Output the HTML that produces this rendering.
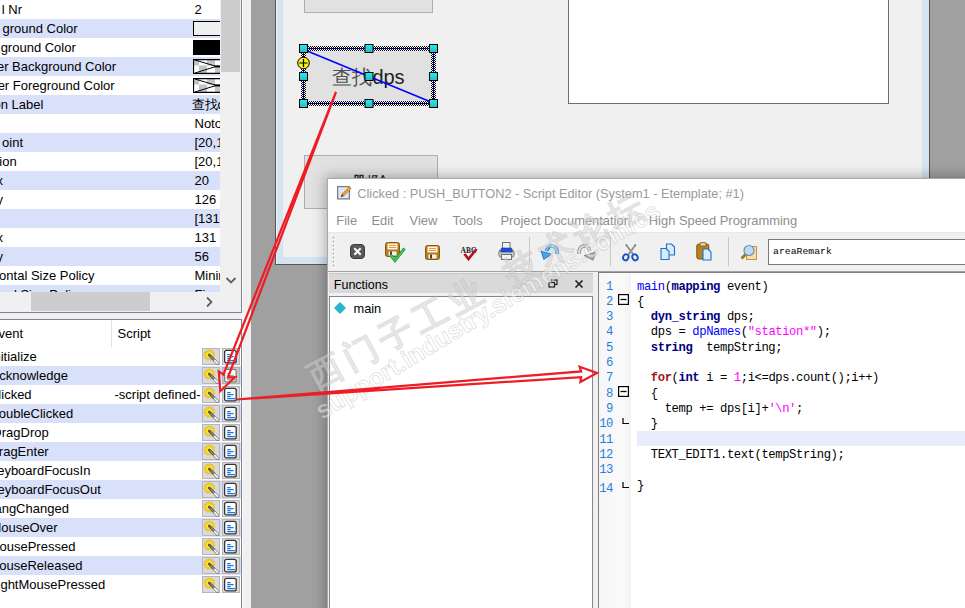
<!DOCTYPE html><html><head><meta charset="utf-8"><style>
*{margin:0;padding:0;box-sizing:border-box}
html,body{width:965px;height:608px;overflow:hidden;background:#a0a0a0;font-family:'Liberation Sans', sans-serif;position:relative}
.a{position:absolute}
.t{position:absolute;white-space:nowrap;font-size:13px;line-height:19px;color:#000}
.code{position:absolute;left:637px;white-space:pre;font-family:'Liberation Mono', monospace;font-size:12.2px;letter-spacing:-0.40px;line-height:15.3px;height:15.3px;color:#000}
.ln{position:absolute;left:593px;width:20px;text-align:right;white-space:pre;font-family:'Liberation Mono', monospace;font-size:12.2px;letter-spacing:-0.40px;line-height:15.3px;color:#1f80e0}
.kw{color:#000080;font-weight:bold}
.fn{color:#0000ff}
.st{color:#ff00ff}
.fr{color:#a01818;font-weight:bold}
.menu{position:absolute;top:208px;line-height:24px;font-size:12.9px;color:#8e8e8e;white-space:nowrap}
</style></head><body>
<div class="a" style="left:0;top:0;width:251px;height:608px;background:#f0f0f0"></div>
<div class="a" style="left:242px;top:0;width:1px;height:608px;background:#fafafa"></div>
<div class="a" style="left:0;top:0;width:220px;height:292px;overflow:hidden;background:#fff">
<div class="a" style="left:0;top:0px;width:220px;height:19px;background:#fff"></div>
<div class="t" style="left:-300px;width:322px;text-align:right;top:0px">l Nr</div>
<div class="a" style="left:0;top:19px;width:220px;height:19px;background:#d8e0fa"></div>
<div class="t" style="left:-300px;width:377.6px;text-align:right;top:19px">ground Color</div>
<div class="a" style="left:0;top:38px;width:220px;height:19px;background:#fff"></div>
<div class="t" style="left:-300px;width:375.8px;text-align:right;top:38px">ground Color</div>
<div class="a" style="left:0;top:57px;width:220px;height:19px;background:#d8e0fa"></div>
<div class="t" style="left:-300px;width:416.2px;text-align:right;top:57px">er Background Color</div>
<div class="a" style="left:0;top:76px;width:220px;height:19px;background:#fff"></div>
<div class="t" style="left:-300px;width:414.7px;text-align:right;top:76px">er Foreground Color</div>
<div class="a" style="left:0;top:95px;width:220px;height:19px;background:#d8e0fa"></div>
<div class="t" style="left:-300px;width:343.4px;text-align:right;top:95px">on Label</div>
<div class="a" style="left:0;top:114px;width:220px;height:19px;background:#fff"></div>
<div class="t" style="left:-300px;width:295px;text-align:right;top:114px"></div>
<div class="a" style="left:0;top:133px;width:220px;height:19px;background:#d8e0fa"></div>
<div class="t" style="left:-300px;width:323px;text-align:right;top:133px">oint</div>
<div class="a" style="left:0;top:152px;width:220px;height:19px;background:#fff"></div>
<div class="t" style="left:-300px;width:316.7px;text-align:right;top:152px">ion</div>
<div class="a" style="left:0;top:171px;width:220px;height:19px;background:#d8e0fa"></div>
<div class="t" style="left:-300px;width:303px;text-align:right;top:171px">x</div>
<div class="a" style="left:0;top:190px;width:220px;height:19px;background:#fff"></div>
<div class="t" style="left:-300px;width:303px;text-align:right;top:190px">y</div>
<div class="a" style="left:0;top:209px;width:220px;height:19px;background:#d8e0fa"></div>
<div class="t" style="left:-300px;width:295px;text-align:right;top:209px"></div>
<div class="a" style="left:0;top:228px;width:220px;height:19px;background:#fff"></div>
<div class="t" style="left:-300px;width:303px;text-align:right;top:228px">x</div>
<div class="a" style="left:0;top:247px;width:220px;height:19px;background:#d8e0fa"></div>
<div class="t" style="left:-300px;width:303px;text-align:right;top:247px">y</div>
<div class="a" style="left:0;top:266px;width:220px;height:19px;background:#fff"></div>
<div class="t" style="left:-300px;width:394.5px;text-align:right;top:266px">zontal Size Policy</div>
<div class="a" style="left:0;top:285px;width:220px;height:19px;background:#d8e0fa"></div>
<div class="t" style="left:-300px;width:384px;text-align:right;top:285px">ical Size Policy</div>
<div class="t" style="left:194.5px;top:0px">2</div>
<div class="t" style="left:191.5px;top:95px">查找dps</div>
<div class="t" style="left:194.5px;top:114px">Noto Sans</div>
<div class="t" style="left:194.5px;top:133px">[20,126]</div>
<div class="t" style="left:194.5px;top:152px">[20,126]</div>
<div class="t" style="left:194.5px;top:171px">20</div>
<div class="t" style="left:194.5px;top:190px">126</div>
<div class="t" style="left:194.5px;top:209px">[131,56]</div>
<div class="t" style="left:194.5px;top:228px">131</div>
<div class="t" style="left:194.5px;top:247px">56</div>
<div class="t" style="left:194.5px;top:266px">Minimum</div>
<div class="t" style="left:194.5px;top:285px">Fixed</div>
<div class="a" style="left:193px;top:21px;width:40px;height:15px;background:#f0f0f0;border:1px solid #000"></div>
<div class="a" style="left:193px;top:40px;width:40px;height:15px;background:#000"></div>
<svg class="a" style="left:193px;top:59px" width="30" height="15" viewBox="0 0 30 15">
<rect x="0" y="0" width="30" height="15" fill="#fff"/>
<g fill="#c4c4c4"><rect x="1" y="1" width="5" height="5.5"/><rect x="14" y="1" width="8" height="5.5"/><rect x="6" y="6.5" width="8" height="7.5"/><rect x="22" y="6.5" width="8" height="7.5"/></g>
<path d="M0.5 0 V15 M0 0.6 H30 M0 14.4 H30" stroke="#000" stroke-width="1.2" fill="none"/>
<path d="M2 1 L22 7 M2 14 L22 7.8" stroke="#000" stroke-width="1" fill="none"/>
<rect x="21.5" y="6.4" width="9" height="2" fill="#000"/>
</svg>
<svg class="a" style="left:193px;top:78px" width="30" height="15" viewBox="0 0 30 15">
<rect x="0" y="0" width="30" height="15" fill="#fff"/>
<g fill="#c4c4c4"><rect x="1" y="1" width="5" height="5.5"/><rect x="14" y="1" width="8" height="5.5"/><rect x="6" y="6.5" width="8" height="7.5"/><rect x="22" y="6.5" width="8" height="7.5"/></g>
<path d="M0.5 0 V15 M0 0.6 H30 M0 14.4 H30" stroke="#000" stroke-width="1.2" fill="none"/>
<path d="M2 1 L22 7 M2 14 L22 7.8" stroke="#000" stroke-width="1" fill="none"/>
<rect x="21.5" y="6.4" width="9" height="2" fill="#000"/>
</svg>
</div>
<div class="a" style="left:220px;top:0;width:21px;height:292px;background:#f0f0f0"></div>
<div class="a" style="left:221px;top:0;width:19px;height:72px;background:#cdcdcd"></div>
<svg class="a" style="left:224px;top:275px" width="14" height="12"><path d="M2.5 3 L7 7.5 L11.5 3" stroke="#606060" stroke-width="1.8" fill="none"/></svg>
<div class="a" style="left:0;top:292px;width:241px;height:20px;background:#f0f0f0"></div>
<div class="a" style="left:31px;top:292px;width:119px;height:19px;background:#cdcdcd"></div>
<svg class="a" style="left:203px;top:295px" width="14" height="14"><path d="M4 2.5 L8.5 7 L4 11.5" stroke="#606060" stroke-width="1.8" fill="none"/></svg>
<div class="a" style="left:241px;top:0;width:1px;height:313px;background:#7d8590"></div>
<div class="a" style="left:0;top:312px;width:242px;height:1px;background:#7d8590"></div>
<div class="a" style="left:0;top:319px;width:242px;height:1px;background:#7d8590"></div>
<div class="a" style="left:241px;top:319px;width:1px;height:289px;background:#7d8590"></div>
<div class="a" style="left:0;top:320px;width:241px;height:288px;background:#fff;overflow:hidden">
<div class="a" style="left:111px;top:0;width:1px;height:27px;background:#e3e3e3"></div>
<div class="t" style="left:-300px;width:323.2px;text-align:right;top:4px;line-height:19px">Event</div>
<div class="t" style="left:117.5px;top:4px">Script</div>
<div class="a" style="left:0;top:27px;width:241px;height:19px;background:#fff"></div>
<div class="t" style="left:-300px;width:336.8px;text-align:right;top:27px">Initialize</div>
<svg class="a" style="left:202px;top:28px" width="18" height="17" viewBox="0 0 18 17">
<rect x="0.5" y="0.5" width="17" height="16" fill="#dadada" stroke="#b6b6b6"/>
<g transform="translate(7.3,7)"><path d="M0 -5.6 L1.1 -3.9 L2.9 -4.8 L3.1 -2.8 L5.1 -2.6 L4.2 -0.9 L5.6 0.5 L3.8 1.5 L4.3 3.5 L2.3 3.5 L1.7 5.4 L0 4.2 L-1.7 5.4 L-2.3 3.5 L-4.3 3.5 L-3.8 1.5 L-5.6 0.5 L-4.2 -0.9 L-5.1 -2.6 L-3.1 -2.8 L-2.9 -4.8 L-1.1 -3.9 Z" fill="#f8d81a" stroke="#e0b030" stroke-width="0.7"/>
<circle r="2.6" fill="#fbe64a"/></g>
<path d="M7.3 7 L15.6 15.4" stroke="#5a5a5a" stroke-width="2.8" stroke-linecap="round"/>
<path d="M8.6 8.3 L13 12.7" stroke="#a8a8a8" stroke-width="1"/>
<path d="M12.8 12.6 L15.6 15.4" stroke="#f8f8f8" stroke-width="2" stroke-linecap="round"/>
</svg>
<svg class="a" style="left:222px;top:28px" width="18" height="17" viewBox="0 0 18 17">
<rect x="0.5" y="0.5" width="17" height="16" fill="#dadada" stroke="#b6b6b6"/>
<rect x="2.6" y="2.3" width="11.6" height="12.6" rx="2" fill="#fdfdfd" stroke="#333" stroke-width="1.3"/>
<g stroke="#1a78e6" stroke-width="1.25" stroke-linecap="butt"><path d="M5.2 6.5 H8.6 M5.2 8.5 H11.6 M5.2 10.5 H8.6 M5.2 12.5 H13"/></g>
</svg>
<div class="a" style="left:0;top:46px;width:241px;height:19px;background:#d8e0fa"></div>
<div class="t" style="left:-300px;width:367.9px;text-align:right;top:46px">Acknowledge</div>
<svg class="a" style="left:202px;top:47px" width="18" height="17" viewBox="0 0 18 17">
<rect x="0.5" y="0.5" width="17" height="16" fill="#dadada" stroke="#b6b6b6"/>
<g transform="translate(7.3,7)"><path d="M0 -5.6 L1.1 -3.9 L2.9 -4.8 L3.1 -2.8 L5.1 -2.6 L4.2 -0.9 L5.6 0.5 L3.8 1.5 L4.3 3.5 L2.3 3.5 L1.7 5.4 L0 4.2 L-1.7 5.4 L-2.3 3.5 L-4.3 3.5 L-3.8 1.5 L-5.6 0.5 L-4.2 -0.9 L-5.1 -2.6 L-3.1 -2.8 L-2.9 -4.8 L-1.1 -3.9 Z" fill="#f8d81a" stroke="#e0b030" stroke-width="0.7"/>
<circle r="2.6" fill="#fbe64a"/></g>
<path d="M7.3 7 L15.6 15.4" stroke="#5a5a5a" stroke-width="2.8" stroke-linecap="round"/>
<path d="M8.6 8.3 L13 12.7" stroke="#a8a8a8" stroke-width="1"/>
<path d="M12.8 12.6 L15.6 15.4" stroke="#f8f8f8" stroke-width="2" stroke-linecap="round"/>
</svg>
<svg class="a" style="left:222px;top:47px" width="18" height="17" viewBox="0 0 18 17">
<rect x="0.5" y="0.5" width="17" height="16" fill="#c8c8c8" stroke="#b0b0b0"/>
<rect x="2.6" y="2.3" width="11.6" height="12.6" rx="2" fill="#fdfdfd" stroke="#808080" stroke-width="1.3"/>
<g stroke="#9a9a9a" stroke-width="1.25" stroke-linecap="butt"><path d="M5.2 6.5 H8.6 M5.2 8.5 H11.6 M5.2 10.5 H8.6 M5.2 12.5 H13"/></g>
</svg>
<div class="a" style="left:0;top:65px;width:241px;height:19px;background:#fff"></div>
<div class="t" style="left:-300px;width:331.6px;text-align:right;top:65px">Clicked</div>
<div class="t" style="left:114.5px;top:65px">-script defined-</div>
<svg class="a" style="left:202px;top:66px" width="18" height="17" viewBox="0 0 18 17">
<rect x="0.5" y="0.5" width="17" height="16" fill="#dadada" stroke="#b6b6b6"/>
<g transform="translate(7.3,7)"><path d="M0 -5.6 L1.1 -3.9 L2.9 -4.8 L3.1 -2.8 L5.1 -2.6 L4.2 -0.9 L5.6 0.5 L3.8 1.5 L4.3 3.5 L2.3 3.5 L1.7 5.4 L0 4.2 L-1.7 5.4 L-2.3 3.5 L-4.3 3.5 L-3.8 1.5 L-5.6 0.5 L-4.2 -0.9 L-5.1 -2.6 L-3.1 -2.8 L-2.9 -4.8 L-1.1 -3.9 Z" fill="#f8d81a" stroke="#e0b030" stroke-width="0.7"/>
<circle r="2.6" fill="#fbe64a"/></g>
<path d="M7.3 7 L15.6 15.4" stroke="#5a5a5a" stroke-width="2.8" stroke-linecap="round"/>
<path d="M8.6 8.3 L13 12.7" stroke="#a8a8a8" stroke-width="1"/>
<path d="M12.8 12.6 L15.6 15.4" stroke="#f8f8f8" stroke-width="2" stroke-linecap="round"/>
</svg>
<svg class="a" style="left:222px;top:66px" width="18" height="17" viewBox="0 0 18 17">
<rect x="0.5" y="0.5" width="17" height="16" fill="#dadada" stroke="#b6b6b6"/>
<rect x="2.6" y="2.3" width="11.6" height="12.6" rx="2" fill="#fdfdfd" stroke="#333" stroke-width="1.3"/>
<g stroke="#1a78e6" stroke-width="1.25" stroke-linecap="butt"><path d="M5.2 6.5 H8.6 M5.2 8.5 H11.6 M5.2 10.5 H8.6 M5.2 12.5 H13"/></g>
</svg>
<div class="a" style="left:0;top:84px;width:241px;height:19px;background:#d8e0fa"></div>
<div class="t" style="left:-300px;width:373.2px;text-align:right;top:84px">DoubleClicked</div>
<svg class="a" style="left:202px;top:85px" width="18" height="17" viewBox="0 0 18 17">
<rect x="0.5" y="0.5" width="17" height="16" fill="#dadada" stroke="#b6b6b6"/>
<g transform="translate(7.3,7)"><path d="M0 -5.6 L1.1 -3.9 L2.9 -4.8 L3.1 -2.8 L5.1 -2.6 L4.2 -0.9 L5.6 0.5 L3.8 1.5 L4.3 3.5 L2.3 3.5 L1.7 5.4 L0 4.2 L-1.7 5.4 L-2.3 3.5 L-4.3 3.5 L-3.8 1.5 L-5.6 0.5 L-4.2 -0.9 L-5.1 -2.6 L-3.1 -2.8 L-2.9 -4.8 L-1.1 -3.9 Z" fill="#f8d81a" stroke="#e0b030" stroke-width="0.7"/>
<circle r="2.6" fill="#fbe64a"/></g>
<path d="M7.3 7 L15.6 15.4" stroke="#5a5a5a" stroke-width="2.8" stroke-linecap="round"/>
<path d="M8.6 8.3 L13 12.7" stroke="#a8a8a8" stroke-width="1"/>
<path d="M12.8 12.6 L15.6 15.4" stroke="#f8f8f8" stroke-width="2" stroke-linecap="round"/>
</svg>
<svg class="a" style="left:222px;top:85px" width="18" height="17" viewBox="0 0 18 17">
<rect x="0.5" y="0.5" width="17" height="16" fill="#dadada" stroke="#b6b6b6"/>
<rect x="2.6" y="2.3" width="11.6" height="12.6" rx="2" fill="#fdfdfd" stroke="#333" stroke-width="1.3"/>
<g stroke="#1a78e6" stroke-width="1.25" stroke-linecap="butt"><path d="M5.2 6.5 H8.6 M5.2 8.5 H11.6 M5.2 10.5 H8.6 M5.2 12.5 H13"/></g>
</svg>
<div class="a" style="left:0;top:103px;width:241px;height:19px;background:#fff"></div>
<div class="t" style="left:-300px;width:348.7px;text-align:right;top:103px">DragDrop</div>
<svg class="a" style="left:202px;top:104px" width="18" height="17" viewBox="0 0 18 17">
<rect x="0.5" y="0.5" width="17" height="16" fill="#dadada" stroke="#b6b6b6"/>
<g transform="translate(7.3,7)"><path d="M0 -5.6 L1.1 -3.9 L2.9 -4.8 L3.1 -2.8 L5.1 -2.6 L4.2 -0.9 L5.6 0.5 L3.8 1.5 L4.3 3.5 L2.3 3.5 L1.7 5.4 L0 4.2 L-1.7 5.4 L-2.3 3.5 L-4.3 3.5 L-3.8 1.5 L-5.6 0.5 L-4.2 -0.9 L-5.1 -2.6 L-3.1 -2.8 L-2.9 -4.8 L-1.1 -3.9 Z" fill="#f8d81a" stroke="#e0b030" stroke-width="0.7"/>
<circle r="2.6" fill="#fbe64a"/></g>
<path d="M7.3 7 L15.6 15.4" stroke="#5a5a5a" stroke-width="2.8" stroke-linecap="round"/>
<path d="M8.6 8.3 L13 12.7" stroke="#a8a8a8" stroke-width="1"/>
<path d="M12.8 12.6 L15.6 15.4" stroke="#f8f8f8" stroke-width="2" stroke-linecap="round"/>
</svg>
<svg class="a" style="left:222px;top:104px" width="18" height="17" viewBox="0 0 18 17">
<rect x="0.5" y="0.5" width="17" height="16" fill="#dadada" stroke="#b6b6b6"/>
<rect x="2.6" y="2.3" width="11.6" height="12.6" rx="2" fill="#fdfdfd" stroke="#333" stroke-width="1.3"/>
<g stroke="#1a78e6" stroke-width="1.25" stroke-linecap="butt"><path d="M5.2 6.5 H8.6 M5.2 8.5 H11.6 M5.2 10.5 H8.6 M5.2 12.5 H13"/></g>
</svg>
<div class="a" style="left:0;top:122px;width:241px;height:19px;background:#d8e0fa"></div>
<div class="t" style="left:-300px;width:348.7px;text-align:right;top:122px">DragEnter</div>
<svg class="a" style="left:202px;top:123px" width="18" height="17" viewBox="0 0 18 17">
<rect x="0.5" y="0.5" width="17" height="16" fill="#dadada" stroke="#b6b6b6"/>
<g transform="translate(7.3,7)"><path d="M0 -5.6 L1.1 -3.9 L2.9 -4.8 L3.1 -2.8 L5.1 -2.6 L4.2 -0.9 L5.6 0.5 L3.8 1.5 L4.3 3.5 L2.3 3.5 L1.7 5.4 L0 4.2 L-1.7 5.4 L-2.3 3.5 L-4.3 3.5 L-3.8 1.5 L-5.6 0.5 L-4.2 -0.9 L-5.1 -2.6 L-3.1 -2.8 L-2.9 -4.8 L-1.1 -3.9 Z" fill="#f8d81a" stroke="#e0b030" stroke-width="0.7"/>
<circle r="2.6" fill="#fbe64a"/></g>
<path d="M7.3 7 L15.6 15.4" stroke="#5a5a5a" stroke-width="2.8" stroke-linecap="round"/>
<path d="M8.6 8.3 L13 12.7" stroke="#a8a8a8" stroke-width="1"/>
<path d="M12.8 12.6 L15.6 15.4" stroke="#f8f8f8" stroke-width="2" stroke-linecap="round"/>
</svg>
<svg class="a" style="left:222px;top:123px" width="18" height="17" viewBox="0 0 18 17">
<rect x="0.5" y="0.5" width="17" height="16" fill="#dadada" stroke="#b6b6b6"/>
<rect x="2.6" y="2.3" width="11.6" height="12.6" rx="2" fill="#fdfdfd" stroke="#333" stroke-width="1.3"/>
<g stroke="#1a78e6" stroke-width="1.25" stroke-linecap="butt"><path d="M5.2 6.5 H8.6 M5.2 8.5 H11.6 M5.2 10.5 H8.6 M5.2 12.5 H13"/></g>
</svg>
<div class="a" style="left:0;top:141px;width:241px;height:19px;background:#fff"></div>
<div class="t" style="left:-300px;width:390.4px;text-align:right;top:141px">KeyboardFocusIn</div>
<svg class="a" style="left:202px;top:142px" width="18" height="17" viewBox="0 0 18 17">
<rect x="0.5" y="0.5" width="17" height="16" fill="#dadada" stroke="#b6b6b6"/>
<g transform="translate(7.3,7)"><path d="M0 -5.6 L1.1 -3.9 L2.9 -4.8 L3.1 -2.8 L5.1 -2.6 L4.2 -0.9 L5.6 0.5 L3.8 1.5 L4.3 3.5 L2.3 3.5 L1.7 5.4 L0 4.2 L-1.7 5.4 L-2.3 3.5 L-4.3 3.5 L-3.8 1.5 L-5.6 0.5 L-4.2 -0.9 L-5.1 -2.6 L-3.1 -2.8 L-2.9 -4.8 L-1.1 -3.9 Z" fill="#f8d81a" stroke="#e0b030" stroke-width="0.7"/>
<circle r="2.6" fill="#fbe64a"/></g>
<path d="M7.3 7 L15.6 15.4" stroke="#5a5a5a" stroke-width="2.8" stroke-linecap="round"/>
<path d="M8.6 8.3 L13 12.7" stroke="#a8a8a8" stroke-width="1"/>
<path d="M12.8 12.6 L15.6 15.4" stroke="#f8f8f8" stroke-width="2" stroke-linecap="round"/>
</svg>
<svg class="a" style="left:222px;top:142px" width="18" height="17" viewBox="0 0 18 17">
<rect x="0.5" y="0.5" width="17" height="16" fill="#dadada" stroke="#b6b6b6"/>
<rect x="2.6" y="2.3" width="11.6" height="12.6" rx="2" fill="#fdfdfd" stroke="#333" stroke-width="1.3"/>
<g stroke="#1a78e6" stroke-width="1.25" stroke-linecap="butt"><path d="M5.2 6.5 H8.6 M5.2 8.5 H11.6 M5.2 10.5 H8.6 M5.2 12.5 H13"/></g>
</svg>
<div class="a" style="left:0;top:160px;width:241px;height:19px;background:#d8e0fa"></div>
<div class="t" style="left:-300px;width:400.8px;text-align:right;top:160px">KeyboardFocusOut</div>
<svg class="a" style="left:202px;top:161px" width="18" height="17" viewBox="0 0 18 17">
<rect x="0.5" y="0.5" width="17" height="16" fill="#dadada" stroke="#b6b6b6"/>
<g transform="translate(7.3,7)"><path d="M0 -5.6 L1.1 -3.9 L2.9 -4.8 L3.1 -2.8 L5.1 -2.6 L4.2 -0.9 L5.6 0.5 L3.8 1.5 L4.3 3.5 L2.3 3.5 L1.7 5.4 L0 4.2 L-1.7 5.4 L-2.3 3.5 L-4.3 3.5 L-3.8 1.5 L-5.6 0.5 L-4.2 -0.9 L-5.1 -2.6 L-3.1 -2.8 L-2.9 -4.8 L-1.1 -3.9 Z" fill="#f8d81a" stroke="#e0b030" stroke-width="0.7"/>
<circle r="2.6" fill="#fbe64a"/></g>
<path d="M7.3 7 L15.6 15.4" stroke="#5a5a5a" stroke-width="2.8" stroke-linecap="round"/>
<path d="M8.6 8.3 L13 12.7" stroke="#a8a8a8" stroke-width="1"/>
<path d="M12.8 12.6 L15.6 15.4" stroke="#f8f8f8" stroke-width="2" stroke-linecap="round"/>
</svg>
<svg class="a" style="left:222px;top:161px" width="18" height="17" viewBox="0 0 18 17">
<rect x="0.5" y="0.5" width="17" height="16" fill="#dadada" stroke="#b6b6b6"/>
<rect x="2.6" y="2.3" width="11.6" height="12.6" rx="2" fill="#fdfdfd" stroke="#333" stroke-width="1.3"/>
<g stroke="#1a78e6" stroke-width="1.25" stroke-linecap="butt"><path d="M5.2 6.5 H8.6 M5.2 8.5 H11.6 M5.2 10.5 H8.6 M5.2 12.5 H13"/></g>
</svg>
<div class="a" style="left:0;top:179px;width:241px;height:19px;background:#fff"></div>
<div class="t" style="left:-300px;width:368.9px;text-align:right;top:179px">LangChanged</div>
<svg class="a" style="left:202px;top:180px" width="18" height="17" viewBox="0 0 18 17">
<rect x="0.5" y="0.5" width="17" height="16" fill="#dadada" stroke="#b6b6b6"/>
<g transform="translate(7.3,7)"><path d="M0 -5.6 L1.1 -3.9 L2.9 -4.8 L3.1 -2.8 L5.1 -2.6 L4.2 -0.9 L5.6 0.5 L3.8 1.5 L4.3 3.5 L2.3 3.5 L1.7 5.4 L0 4.2 L-1.7 5.4 L-2.3 3.5 L-4.3 3.5 L-3.8 1.5 L-5.6 0.5 L-4.2 -0.9 L-5.1 -2.6 L-3.1 -2.8 L-2.9 -4.8 L-1.1 -3.9 Z" fill="#f8d81a" stroke="#e0b030" stroke-width="0.7"/>
<circle r="2.6" fill="#fbe64a"/></g>
<path d="M7.3 7 L15.6 15.4" stroke="#5a5a5a" stroke-width="2.8" stroke-linecap="round"/>
<path d="M8.6 8.3 L13 12.7" stroke="#a8a8a8" stroke-width="1"/>
<path d="M12.8 12.6 L15.6 15.4" stroke="#f8f8f8" stroke-width="2" stroke-linecap="round"/>
</svg>
<svg class="a" style="left:222px;top:180px" width="18" height="17" viewBox="0 0 18 17">
<rect x="0.5" y="0.5" width="17" height="16" fill="#dadada" stroke="#b6b6b6"/>
<rect x="2.6" y="2.3" width="11.6" height="12.6" rx="2" fill="#fdfdfd" stroke="#333" stroke-width="1.3"/>
<g stroke="#1a78e6" stroke-width="1.25" stroke-linecap="butt"><path d="M5.2 6.5 H8.6 M5.2 8.5 H11.6 M5.2 10.5 H8.6 M5.2 12.5 H13"/></g>
</svg>
<div class="a" style="left:0;top:198px;width:241px;height:19px;background:#d8e0fa"></div>
<div class="t" style="left:-300px;width:357.7px;text-align:right;top:198px">MouseOver</div>
<svg class="a" style="left:202px;top:199px" width="18" height="17" viewBox="0 0 18 17">
<rect x="0.5" y="0.5" width="17" height="16" fill="#dadada" stroke="#b6b6b6"/>
<g transform="translate(7.3,7)"><path d="M0 -5.6 L1.1 -3.9 L2.9 -4.8 L3.1 -2.8 L5.1 -2.6 L4.2 -0.9 L5.6 0.5 L3.8 1.5 L4.3 3.5 L2.3 3.5 L1.7 5.4 L0 4.2 L-1.7 5.4 L-2.3 3.5 L-4.3 3.5 L-3.8 1.5 L-5.6 0.5 L-4.2 -0.9 L-5.1 -2.6 L-3.1 -2.8 L-2.9 -4.8 L-1.1 -3.9 Z" fill="#f8d81a" stroke="#e0b030" stroke-width="0.7"/>
<circle r="2.6" fill="#fbe64a"/></g>
<path d="M7.3 7 L15.6 15.4" stroke="#5a5a5a" stroke-width="2.8" stroke-linecap="round"/>
<path d="M8.6 8.3 L13 12.7" stroke="#a8a8a8" stroke-width="1"/>
<path d="M12.8 12.6 L15.6 15.4" stroke="#f8f8f8" stroke-width="2" stroke-linecap="round"/>
</svg>
<svg class="a" style="left:222px;top:199px" width="18" height="17" viewBox="0 0 18 17">
<rect x="0.5" y="0.5" width="17" height="16" fill="#dadada" stroke="#b6b6b6"/>
<rect x="2.6" y="2.3" width="11.6" height="12.6" rx="2" fill="#fdfdfd" stroke="#333" stroke-width="1.3"/>
<g stroke="#1a78e6" stroke-width="1.25" stroke-linecap="butt"><path d="M5.2 6.5 H8.6 M5.2 8.5 H11.6 M5.2 10.5 H8.6 M5.2 12.5 H13"/></g>
</svg>
<div class="a" style="left:0;top:217px;width:241px;height:19px;background:#fff"></div>
<div class="t" style="left:-300px;width:375.4px;text-align:right;top:217px">MousePressed</div>
<svg class="a" style="left:202px;top:218px" width="18" height="17" viewBox="0 0 18 17">
<rect x="0.5" y="0.5" width="17" height="16" fill="#dadada" stroke="#b6b6b6"/>
<g transform="translate(7.3,7)"><path d="M0 -5.6 L1.1 -3.9 L2.9 -4.8 L3.1 -2.8 L5.1 -2.6 L4.2 -0.9 L5.6 0.5 L3.8 1.5 L4.3 3.5 L2.3 3.5 L1.7 5.4 L0 4.2 L-1.7 5.4 L-2.3 3.5 L-4.3 3.5 L-3.8 1.5 L-5.6 0.5 L-4.2 -0.9 L-5.1 -2.6 L-3.1 -2.8 L-2.9 -4.8 L-1.1 -3.9 Z" fill="#f8d81a" stroke="#e0b030" stroke-width="0.7"/>
<circle r="2.6" fill="#fbe64a"/></g>
<path d="M7.3 7 L15.6 15.4" stroke="#5a5a5a" stroke-width="2.8" stroke-linecap="round"/>
<path d="M8.6 8.3 L13 12.7" stroke="#a8a8a8" stroke-width="1"/>
<path d="M12.8 12.6 L15.6 15.4" stroke="#f8f8f8" stroke-width="2" stroke-linecap="round"/>
</svg>
<svg class="a" style="left:222px;top:218px" width="18" height="17" viewBox="0 0 18 17">
<rect x="0.5" y="0.5" width="17" height="16" fill="#dadada" stroke="#b6b6b6"/>
<rect x="2.6" y="2.3" width="11.6" height="12.6" rx="2" fill="#fdfdfd" stroke="#333" stroke-width="1.3"/>
<g stroke="#1a78e6" stroke-width="1.25" stroke-linecap="butt"><path d="M5.2 6.5 H8.6 M5.2 8.5 H11.6 M5.2 10.5 H8.6 M5.2 12.5 H13"/></g>
</svg>
<div class="a" style="left:0;top:236px;width:241px;height:19px;background:#d8e0fa"></div>
<div class="t" style="left:-300px;width:382.4px;text-align:right;top:236px">MouseReleased</div>
<svg class="a" style="left:202px;top:237px" width="18" height="17" viewBox="0 0 18 17">
<rect x="0.5" y="0.5" width="17" height="16" fill="#dadada" stroke="#b6b6b6"/>
<g transform="translate(7.3,7)"><path d="M0 -5.6 L1.1 -3.9 L2.9 -4.8 L3.1 -2.8 L5.1 -2.6 L4.2 -0.9 L5.6 0.5 L3.8 1.5 L4.3 3.5 L2.3 3.5 L1.7 5.4 L0 4.2 L-1.7 5.4 L-2.3 3.5 L-4.3 3.5 L-3.8 1.5 L-5.6 0.5 L-4.2 -0.9 L-5.1 -2.6 L-3.1 -2.8 L-2.9 -4.8 L-1.1 -3.9 Z" fill="#f8d81a" stroke="#e0b030" stroke-width="0.7"/>
<circle r="2.6" fill="#fbe64a"/></g>
<path d="M7.3 7 L15.6 15.4" stroke="#5a5a5a" stroke-width="2.8" stroke-linecap="round"/>
<path d="M8.6 8.3 L13 12.7" stroke="#a8a8a8" stroke-width="1"/>
<path d="M12.8 12.6 L15.6 15.4" stroke="#f8f8f8" stroke-width="2" stroke-linecap="round"/>
</svg>
<svg class="a" style="left:222px;top:237px" width="18" height="17" viewBox="0 0 18 17">
<rect x="0.5" y="0.5" width="17" height="16" fill="#dadada" stroke="#b6b6b6"/>
<rect x="2.6" y="2.3" width="11.6" height="12.6" rx="2" fill="#fdfdfd" stroke="#333" stroke-width="1.3"/>
<g stroke="#1a78e6" stroke-width="1.25" stroke-linecap="butt"><path d="M5.2 6.5 H8.6 M5.2 8.5 H11.6 M5.2 10.5 H8.6 M5.2 12.5 H13"/></g>
</svg>
<div class="a" style="left:0;top:255px;width:241px;height:19px;background:#fff"></div>
<div class="t" style="left:-300px;width:405.2px;text-align:right;top:255px">RightMousePressed</div>
<svg class="a" style="left:202px;top:256px" width="18" height="17" viewBox="0 0 18 17">
<rect x="0.5" y="0.5" width="17" height="16" fill="#dadada" stroke="#b6b6b6"/>
<g transform="translate(7.3,7)"><path d="M0 -5.6 L1.1 -3.9 L2.9 -4.8 L3.1 -2.8 L5.1 -2.6 L4.2 -0.9 L5.6 0.5 L3.8 1.5 L4.3 3.5 L2.3 3.5 L1.7 5.4 L0 4.2 L-1.7 5.4 L-2.3 3.5 L-4.3 3.5 L-3.8 1.5 L-5.6 0.5 L-4.2 -0.9 L-5.1 -2.6 L-3.1 -2.8 L-2.9 -4.8 L-1.1 -3.9 Z" fill="#f8d81a" stroke="#e0b030" stroke-width="0.7"/>
<circle r="2.6" fill="#fbe64a"/></g>
<path d="M7.3 7 L15.6 15.4" stroke="#5a5a5a" stroke-width="2.8" stroke-linecap="round"/>
<path d="M8.6 8.3 L13 12.7" stroke="#a8a8a8" stroke-width="1"/>
<path d="M12.8 12.6 L15.6 15.4" stroke="#f8f8f8" stroke-width="2" stroke-linecap="round"/>
</svg>
<svg class="a" style="left:222px;top:256px" width="18" height="17" viewBox="0 0 18 17">
<rect x="0.5" y="0.5" width="17" height="16" fill="#dadada" stroke="#b6b6b6"/>
<rect x="2.6" y="2.3" width="11.6" height="12.6" rx="2" fill="#fdfdfd" stroke="#333" stroke-width="1.3"/>
<g stroke="#1a78e6" stroke-width="1.25" stroke-linecap="butt"><path d="M5.2 6.5 H8.6 M5.2 8.5 H11.6 M5.2 10.5 H8.6 M5.2 12.5 H13"/></g>
</svg>
</div>
<div class="a" style="left:275px;top:0;width:655px;height:265px;background:#555"></div>
<div class="a" style="left:276px;top:0;width:653px;height:264px;background:#eef3f9"></div>
<div class="a" style="left:277px;top:0;width:652px;height:264px;background:#d6e3f1"></div>
<div class="a" style="left:929px;top:0;width:1px;height:265px;background:#555"></div>
<div class="a" style="left:283px;top:0;width:639px;height:257px;background:#f0f0f0"></div>
<div class="a" style="left:304px;top:-10px;width:129px;height:23px;background:#e1e1e1;border:1px solid #adadad"></div>
<div class="a" style="left:568px;top:-10px;width:321px;height:114px;background:#fff;border:1px solid #6e6e6e"></div>
<div class="a" style="left:304px;top:155px;width:134px;height:54px;background:#e1e1e1;border:1px solid #adadad;overflow:hidden"><div style="position:absolute;left:46.5px;top:14.8px;font-size:19px;color:#222">删除</div></div>
<div class="a" style="left:303.5px;top:48px;width:130px;height:55.5px;background:#e1e1e1"></div>
<div class="a" style="left:303.5px;top:61.5px;width:130px;text-align:center;font-size:20px;line-height:30px;color:#222;white-space:nowrap"><span style="color:#505050;font-weight:300">查找</span>dps</div>
<svg class="a" style="left:290px;top:35px" width="160" height="80" viewBox="290 35 160 80">
<defs><pattern id="ck" x="0" y="0" width="2" height="2" patternUnits="userSpaceOnUse"><rect width="2" height="2" fill="#fff"/><rect width="1" height="1" fill="#000"/><rect x="1" y="1" width="1" height="1" fill="#000"/></pattern>
<pattern id="bh" x="0" y="0" width="2" height="1" patternUnits="userSpaceOnUse"><rect x="1" y="0" width="1" height="1" fill="#0000ff"/></pattern></defs>
<g fill="url(#ck)"><rect x="301" y="46" width="135" height="5"/><rect x="301" y="101" width="135" height="5"/><rect x="301" y="46" width="5" height="60"/><rect x="431" y="46" width="5" height="60"/></g>
<g fill="#000"><rect x="302" y="48" width="133" height="1"/><rect x="302" y="103" width="133" height="1"/><rect x="303" y="47" width="1" height="58"/><rect x="433" y="47" width="1" height="58"/></g>
<g fill="#0000ff"><rect x="302" y="48" width="133" height="1" fill="url(#bh)"/><rect x="302" y="103" width="133" height="1" fill="url(#bh)"/></g>
<rect x="303" y="47" width="1" height="58" fill="url(#bv)"/>
<defs><pattern id="bv" x="0" y="0" width="1" height="2" patternUnits="userSpaceOnUse"><rect x="0" y="1" width="1" height="1" fill="#0000ff"/></pattern></defs>
<rect x="433" y="47" width="1" height="58" fill="url(#bv)"/>
<path d="M306 50.5 L431 102" stroke="#0000ff" stroke-width="1.5"/>
<defs><linearGradient id="hg" x1="0" y1="0" x2="0" y2="1"><stop offset="0" stop-color="#16f4f4"/><stop offset="1" stop-color="#36b4bc"/></linearGradient></defs>
<g fill="url(#hg)" stroke="#000" stroke-width="1">
<rect x="299.5" y="44.5" width="8" height="8"/><rect x="365" y="44.5" width="8" height="8"/><rect x="429.5" y="44.5" width="8" height="8"/>
<rect x="299.5" y="72.5" width="8" height="8"/><rect x="365" y="72.5" width="8" height="8"/><rect x="429.5" y="72.5" width="8" height="8"/>
<rect x="299.5" y="99.5" width="8" height="8"/><rect x="365" y="99.5" width="8" height="8"/><rect x="429.5" y="99.5" width="8" height="8"/>
</g>
<circle cx="303.5" cy="63" r="5.8" fill="#f5ef1a" stroke="#000" stroke-width="1"/>
<path d="M299.5 63 H307.5 M303.5 59 V67" stroke="#000" stroke-width="1.2"/>
</svg>
<div class="a" style="left:327px;top:178px;width:700px;height:500px;box-shadow:0 0 12px 2px rgba(0,0,0,0.28)"></div>
<div class="a" style="left:327px;top:178px;width:700px;height:500px;background:#fff;border:1px solid #a8a8a8"></div>
<svg class="a" style="left:337px;top:186px" width="15" height="14" viewBox="0 0 15 14">
<rect x="0.5" y="0.5" width="12" height="12.5" fill="#9fb8d8" stroke="#7a7a7a"/>
<rect x="1.5" y="1.5" width="10" height="10.5" fill="#dce8f6"/>
<path d="M4 11 L5 8 L12.5 0.8 L14.2 2.5 L6.8 9.8 Z" fill="#f59a30" stroke="#c0601a" stroke-width="0.6"/>
<path d="M4 11 L5 8 L6.8 9.8 Z" fill="#444"/>
</svg>
<div class="a" style="left:357.3px;top:186.2px;font-size:12.75px;line-height:16px;color:#9a9a9a;white-space:nowrap">Clicked : PUSH_BUTTON2 - Script Editor (System1 - Etemplate; #1)</div>
<div class="menu" style="left:336.3px;top:208.8px">File</div>
<div class="menu" style="left:371.4px;top:208.8px">Edit</div>
<div class="menu" style="left:409.6px;top:208.8px">View</div>
<div class="menu" style="left:452.5px;top:208.8px">Tools</div>
<div class="menu" style="left:500.4px;top:208.8px">Project Documentation</div>
<div class="menu" style="left:648.8px;top:208.8px">High Speed Programming</div>
<div class="a" style="left:328px;top:232px;width:640px;height:1px;background:#e8e8e8"></div>
<div class="a" style="left:328px;top:233px;width:640px;height:38px;background:#f0f0f0"></div>
<div class="a" style="left:328px;top:271px;width:640px;height:1px;background:#a0a0a0"></div>
<div class="a" style="left:328px;top:272px;width:640px;height:340px;background:#f0f0f0"></div>
<svg class="a" style="left:331px;top:236px" width="5" height="33"><path d="M1 2.5 L3 0.5 V2.5 Z" fill="#8c8c8c"/><rect x="1" y="2.5" width="2.5" height="1" fill="#fff"/><path d="M1 6.5 L3 4.5 V6.5 Z" fill="#8c8c8c"/><rect x="1" y="6.5" width="2.5" height="1" fill="#fff"/><path d="M1 10.5 L3 8.5 V10.5 Z" fill="#8c8c8c"/><rect x="1" y="10.5" width="2.5" height="1" fill="#fff"/><path d="M1 14.5 L3 12.5 V14.5 Z" fill="#8c8c8c"/><rect x="1" y="14.5" width="2.5" height="1" fill="#fff"/><path d="M1 18.5 L3 16.5 V18.5 Z" fill="#8c8c8c"/><rect x="1" y="18.5" width="2.5" height="1" fill="#fff"/><path d="M1 22.5 L3 20.5 V22.5 Z" fill="#8c8c8c"/><rect x="1" y="22.5" width="2.5" height="1" fill="#fff"/><path d="M1 26.5 L3 24.5 V26.5 Z" fill="#8c8c8c"/><rect x="1" y="26.5" width="2.5" height="1" fill="#fff"/><path d="M1 30.5 L3 28.5 V30.5 Z" fill="#8c8c8c"/><rect x="1" y="30.5" width="2.5" height="1" fill="#fff"/></svg>
<div class="a" style="left:528.5px;top:237px;width:1px;height:29px;background:#c8c8c8"></div>
<div class="a" style="left:609.5px;top:237px;width:1px;height:29px;background:#c8c8c8"></div>
<div class="a" style="left:727.5px;top:237px;width:1px;height:29px;background:#c8c8c8"></div>
<svg class="a" style="left:350px;top:244px" width="15" height="15" viewBox="0 0 15 15">
<rect x="0.5" y="0.5" width="14" height="14" rx="3.5" fill="#5a5a5a" stroke="#3a3a3a"/>
<path d="M4.3 4.3 L10.7 10.7 M10.7 4.3 L4.3 10.7" stroke="#fff" stroke-width="2"/></svg>
<svg class="a" style="left:385px;top:242px" width="21" height="21" viewBox="0 0 21 21"><rect x="0.5" y="0.5" width="14" height="14" rx="2" fill="#b57c1c" stroke="#8a5a10"/>
<rect x="2.5" y="1.5" width="10" height="6" fill="#fff4dc"/>
<path d="M4 3.5 H11 M4 5.5 H11" stroke="#e09a50" stroke-width="1"/>
<rect x="3.5" y="9.5" width="8" height="4" fill="#f4f4f4"/>
<rect x="5" y="9.5" width="2" height="4" fill="#404040"/><path d="M5.5 13 L10 18.5 L19.5 6.5" stroke="#1d9c3a" stroke-width="3" fill="none"/><path d="M5.5 13 L10 18.5 L19.5 6.5" stroke="#4fd16a" stroke-width="1.2" fill="none"/></svg>
<svg class="a" style="left:425px;top:245px" width="15" height="15" viewBox="0 0 15 15"><rect x="0.5" y="0.5" width="14" height="14" rx="2" fill="#b57c1c" stroke="#8a5a10"/>
<rect x="2.5" y="1.5" width="10" height="6" fill="#fff4dc"/>
<path d="M4 3.5 H11 M4 5.5 H11" stroke="#e09a50" stroke-width="1"/>
<rect x="3.5" y="9.5" width="8" height="4" fill="#f4f4f4"/>
<rect x="5" y="9.5" width="2" height="4" fill="#404040"/></svg>
<svg class="a" style="left:460px;top:246px" width="18" height="15" viewBox="0 0 18 15">
<text x="0.5" y="7" font-family="Liberation Serif" font-weight="bold" font-size="7.5" fill="#222">ABC</text>
<path d="M4.5 8 L8.5 13 L16.5 3" stroke="#b01020" stroke-width="2.6" fill="none"/></svg>
<svg class="a" style="left:498px;top:242px" width="17" height="19" viewBox="0 0 17 19">
<rect x="4.5" y="0.5" width="7.5" height="6" fill="#f4f4f4" stroke="#707070"/>
<rect x="0.8" y="7.5" width="15.4" height="8" rx="3" fill="#c8c8c8" stroke="#808080"/>
<path d="M3.5 6 H13.5 L14.5 10 H2.5 Z" fill="#1c4fd8" stroke="#1a3aa0" stroke-width="0.6"/>
<rect x="3.5" y="12.5" width="10" height="5" fill="#f6f6f6" stroke="#707070"/>
</svg>
<svg class="a" style="left:0;top:0" width="965" height="300" viewBox="0 0 965 300">
<path d="M557.2 253.8 C557.6 245 549 242.8 546.5 251" stroke="#1f6ec4" stroke-width="3.8" fill="none"/>
<path d="M557.2 253.8 C557.6 245 549 242.8 546.5 251" stroke="#6cc0f2" stroke-width="2" fill="none"/>
<path d="M541.2 251.2 L543.8 259.4 L551.5 254.2 Z" fill="#48a6ea" stroke="#1f6ec4" stroke-width="0.9" stroke-linejoin="round"/>
<path d="M579 253.8 C578.6 245 587.2 242.8 589.7 251" stroke="#8c8c8c" stroke-width="3.6" fill="none"/>
<path d="M579 253.8 C578.6 245 587.2 242.8 589.7 251" stroke="#e2e2e2" stroke-width="1.8" fill="none"/>
<path d="M596 252 L593 260.2 L584.3 255.6 Z" fill="#b0b0b0" stroke="#7a7a7a" stroke-width="0.9" stroke-linejoin="round"/>
</svg>
<svg class="a" style="left:0;top:0" width="965" height="300" viewBox="0 0 965 300">
<path d="M625.8 244.6 L633.2 254.2 M635.8 244.6 L628.6 254.2" stroke="#6e6e6e" stroke-width="1.7"/>
<path d="M626.5 245.5 L632.6 253.5 M635 245.5 L629.2 253.5" stroke="#c8c8c8" stroke-width="0.6"/>
<ellipse cx="625.8" cy="257.3" rx="2.6" ry="3.1" transform="rotate(25 625.8 257.3)" fill="none" stroke="#1450c8" stroke-width="1.9"/>
<ellipse cx="635" cy="257.3" rx="2.6" ry="3.1" transform="rotate(-25 635 257.3)" fill="none" stroke="#1450c8" stroke-width="1.9"/>
</svg>
<svg class="a" style="left:660px;top:243px" width="16" height="18" viewBox="0 0 16 18"><path d="M6.5 1 H11.5 L14.5 4 V12 H6.5 Z" fill="#d8ecfc" stroke="#1c70d0" stroke-width="1.1"/><path d="M1 5.5 H6 L9 8.5 V16.5 H1 Z" fill="#d8ecfc" stroke="#1c70d0" stroke-width="1.1"/></svg>
<svg class="a" style="left:696px;top:242px" width="18" height="20" viewBox="0 0 18 20">
<rect x="0.8" y="2" width="12" height="15" rx="2" fill="#b8801e" stroke="#7e5410"/>
<rect x="4" y="0.6" width="6" height="3.5" rx="1" fill="#e8d4a8" stroke="#7e5410" stroke-width="0.8"/>
<path d="M7 7 H12 L15 10 V18 H7 Z" fill="#d8ecfc" stroke="#1c70d0" stroke-width="1.1"/></svg>
<svg class="a" style="left:740px;top:244px" width="18" height="17" viewBox="0 0 18 17">
<rect x="6.5" y="2.5" width="10" height="13" fill="#f4deb0" stroke="#c89040"/>
<path d="M1.5 14.5 L5.5 10.5" stroke="#a87010" stroke-width="2.6"/>
<circle cx="9" cy="6.5" r="5" fill="#bcdcf2" stroke="#6a8fb8" stroke-width="1.2"/></svg>
<div class="a" style="left:768px;top:239px;width:220px;height:26px;background:#fff;border:1px solid #7a7a7a"></div>
<div class="a" style="left:773px;top:245px;font-family:'Liberation Mono', monospace;font-size:9.8px;line-height:14px;color:#000;white-space:pre">areaRemark</div>
<div class="a" style="left:329px;top:273px;width:264px;height:20px;background:#d9d9d9;border-top:1px solid #c8c8c8"></div>
<div class="a" style="left:333.8px;top:277.3px;font-size:12.5px;line-height:17px;color:#000;white-space:nowrap">Functions</div>
<svg class="a" style="left:548px;top:279px" width="10" height="10" viewBox="0 0 10 10">
<rect x="3.5" y="1" width="5.5" height="4.5" fill="none" stroke="#222" stroke-width="1.2"/>
<rect x="1" y="3.5" width="5.5" height="4.5" fill="#d9d9d9" stroke="#222" stroke-width="1.2"/></svg>
<svg class="a" style="left:574px;top:279px" width="10" height="10" viewBox="0 0 10 10"><path d="M1.5 1.5 L8.5 8.5 M8.5 1.5 L1.5 8.5" stroke="#222" stroke-width="1.7"/></svg>
<div class="a" style="left:328.5px;top:296px;width:264.5px;height:320px;background:#fff;border:1px solid #828790"></div>
<svg class="a" style="left:334px;top:302px" width="12" height="12"><path d="M6 0 L12 6 L6 12 L0 6 Z" fill="#2bb5cc"/></svg>
<div class="a" style="left:353.5px;top:301px;font-size:12.8px;line-height:15px;color:#000">main</div>
<div class="a" style="left:598px;top:272px;width:380px;height:340px;background:#fff;border-left:1px solid #808080;border-top:1px solid #808080"></div>
<div class="a" style="left:599px;top:273px;width:32px;height:340px;background:linear-gradient(90deg,#f6f6f6,#fafafa 70%,#f2f2f2)"></div>
<div class="a" style="left:637px;top:430.8px;width:340px;height:15px;background:#e8ecfb"></div>
<div class="code" style="top:279.50px"><span class="fn">main</span>(<span class="kw">mapping</span> event)</div>
<div class="ln" style="top:279.50px">1</div>
<div class="code" style="top:294.80px">{</div>
<div class="ln" style="top:294.80px">2</div>
<div class="code" style="top:310.10px">  <span class="kw">dyn_string</span> dps;</div>
<div class="ln" style="top:310.10px">3</div>
<div class="code" style="top:325.40px">  dps = <span class="fn">dpNames</span>(<span class="st">"station*"</span>);</div>
<div class="ln" style="top:325.40px">4</div>
<div class="code" style="top:340.70px">  <span class="kw">string</span>  tempString;</div>
<div class="ln" style="top:340.70px">5</div>
<div class="code" style="top:356.00px"></div>
<div class="ln" style="top:356.00px">6</div>
<div class="code" style="top:371.30px">  <span class="fr">for</span>(<span class="kw">int</span> i = <span class="st">1</span>;i&lt;=dps.count();i++)</div>
<div class="ln" style="top:371.30px">7</div>
<div class="code" style="top:386.60px">  {</div>
<div class="ln" style="top:386.60px">8</div>
<div class="code" style="top:401.90px">    temp += dps[i]+<span class="st">'\n'</span>;</div>
<div class="ln" style="top:401.90px">9</div>
<div class="code" style="top:417.20px">  }</div>
<div class="ln" style="top:417.20px">10</div>
<div class="code" style="top:432.50px"></div>
<div class="ln" style="top:432.50px">11</div>
<div class="code" style="top:447.80px">  TEXT_EDIT1.text(tempString);</div>
<div class="ln" style="top:447.80px">12</div>
<div class="code" style="top:463.10px"></div>
<div class="ln" style="top:463.10px">13</div>
<div class="code" style="top:478.80px">}</div>
<div class="ln" style="top:481.80px">14</div>
<svg class="a" style="left:618px;top:294.2px" width="11" height="11"><rect x="0.6" y="0.6" width="9.8" height="9.8" fill="#fff" stroke="#000" stroke-width="1.2"/><path d="M2.5 5.5 H8.5" stroke="#000" stroke-width="1.3"/></svg>
<svg class="a" style="left:618px;top:386.0px" width="11" height="11"><rect x="0.6" y="0.6" width="9.8" height="9.8" fill="#fff" stroke="#000" stroke-width="1.2"/><path d="M2.5 5.5 H8.5" stroke="#000" stroke-width="1.3"/></svg>
<svg class="a" style="left:622px;top:418px" width="8" height="8"><path d="M1 0 V5.5 H7" stroke="#000" stroke-width="1.2" fill="none"/></svg>
<svg class="a" style="left:622px;top:482px" width="8" height="8"><path d="M1 0 V5.5 H7" stroke="#000" stroke-width="1.2" fill="none"/></svg>
<svg class="a" style="left:0;top:0" width="965" height="608" viewBox="0 0 965 608">
<g fill="rgba(255,255,255,0.45)" stroke="rgba(110,110,110,0.2)" stroke-width="1">
<text transform="translate(316,389.5) rotate(-28)" font-family="Liberation Sans, sans-serif" font-weight="bold" font-size="34" letter-spacing="5.5">西门子工业<tspan dx="9"> 技术论坛</tspan></text>
<text transform="translate(322,420) rotate(-31)" font-family="Liberation Sans, sans-serif" font-weight="bold" font-size="25" letter-spacing="0">support.industry.siemens.com/cs</text>
</g></svg>
<svg class="a" style="left:0;top:0" width="965" height="608" viewBox="0 0 965 608">
<g fill="none" stroke="#ee1c24" stroke-width="2.2" stroke-linejoin="miter" stroke-linecap="round">
<path d="M336 92 L228 377.4 L234.8 377.2 L220.3 391.2 L218.8 371.4 L223.4 374.6 Z"/>
<path d="M236.7 399.5 L581.1 371.4 L579.6 366.8 L597 372.9 L580.4 382 L581.1 377.1 Z"/>
</g></svg>
</body></html>
